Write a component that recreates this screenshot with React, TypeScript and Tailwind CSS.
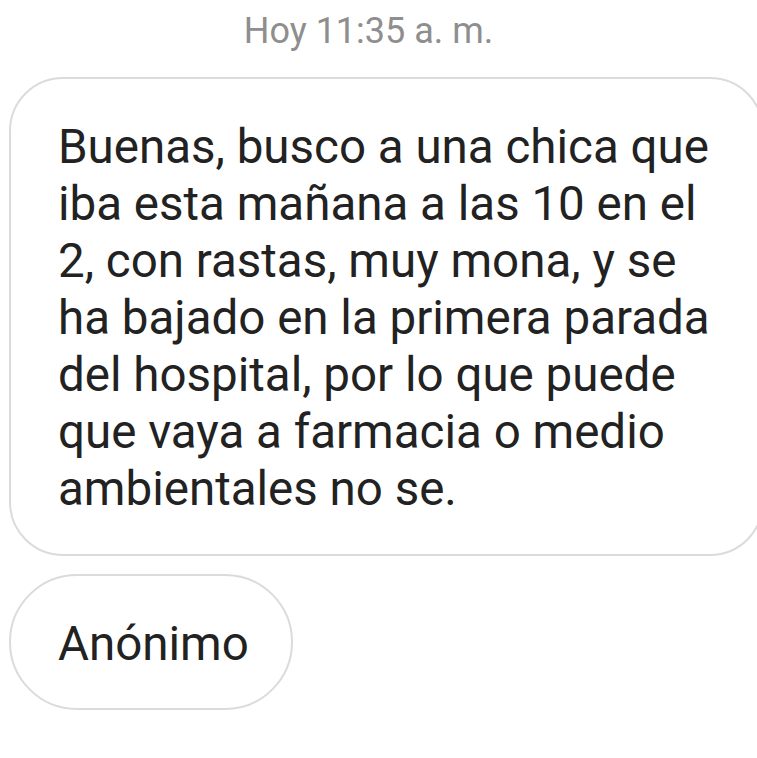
import React from 'react'

const lines = [
  'Buenas, busco a una chica que',
  'iba esta mañana a las 10 en el',
  '2, con rastas, muy mona, y se',
  'ha bajado en la primera parada',
  'del hospital, por lo que puede',
  'que vaya a farmacia o medio',
  'ambientales no se.',
]

const App = () => (
  <div
    className="w-[757px] h-[758px] overflow-hidden bg-white"
    style={{ fontFamily: 'Roboto, "Noto Sans", sans-serif' }}
  >
    {/* timestamp */}
    <div className="pt-[10px] pr-[20px] text-center text-[36px] leading-[42px] text-[#8e8e8e]">
      Hoy 11:35 a. m.
    </div>

    <div className="mt-[25px] ml-[9px] flex flex-col items-start gap-[18px]">
      {/* message bubble */}
      <div className="w-[755px] shrink-0 rounded-[54px] border-2 border-[#dbdbdb] pl-[47px] pt-[40px] pb-[36px] text-[47.5px] leading-[57px] text-[#222222]">
        {lines.map((l) => (
          <div key={l} className="whitespace-nowrap">
            {l}
          </div>
        ))}
      </div>

      {/* sender */}
      <div className="w-[284px] rounded-full border-2 border-[#dbdbdb] pl-[47px] pt-[40px] pb-[35px] text-[47.5px] leading-[57px] text-[#222222]">
        Anónimo
      </div>
    </div>
  </div>
)

export default App
